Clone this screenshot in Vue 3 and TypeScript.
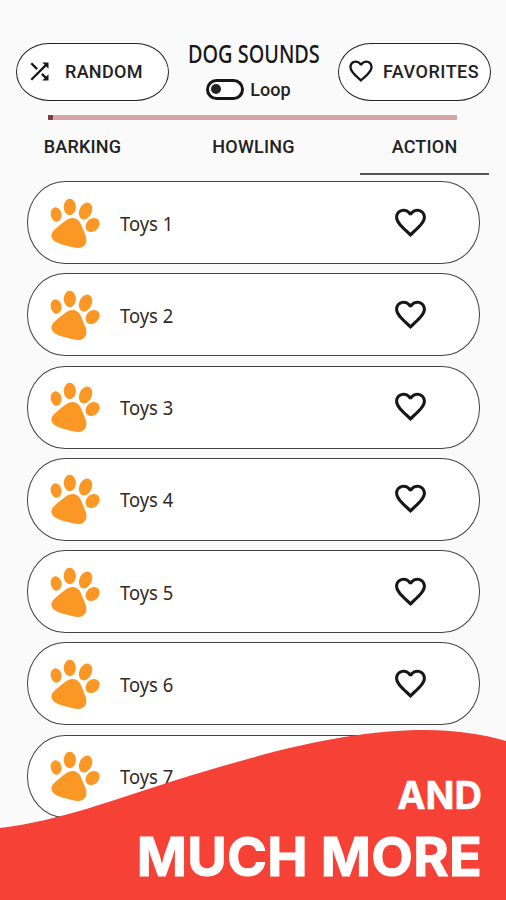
<script setup lang="ts">
const tabs: string[] = ['BARKING', 'HOWLING', 'ACTION']
const activeTab = 'ACTION'
const sounds: string[] = [1, 2, 3, 4, 5, 6, 7].map((n) => `Toys ${n}`)
const heart =
  'M16.5 3c-1.74 0-3.41.81-4.5 2.09C10.91 3.81 9.24 3 7.5 3 4.42 3 2 5.42 2 8.5c0 3.78 3.4 6.86 8.55 11.54L12 21.35l1.45-1.32C18.6 15.36 22 12.28 22 8.5 22 5.42 19.58 3 16.5 3zm-4.4 15.55l-.1.1-.1-.1C7.14 14.24 4 11.39 4 8.5 4 6.5 5.5 5 7.5 5c1.54 0 3.04.99 3.57 2.36h1.87C13.46 5.99 14.96 5 16.5 5c2 0 3.5 1.5 3.5 3.5 0 2.89-3.14 5.74-7.9 10.05z'
</script>

<template>
  <main class="screen">
    <header class="top">
      <button class="pill random">
        <svg class="shuffle" viewBox="0 0 24 24">
          <path d="M10.59 9.17L5.41 4 4 5.41l5.17 5.17 1.42-1.41zM14.5 4l2.04 2.04L4 18.59 5.41 20 17.96 7.46 20 9.5V4h-5.5zm.33 9.41l-1.41 1.41 3.13 3.13L14.5 20H20v-5.5l-2.04 2.04-3.13-3.13z" />
        </svg>
        <span class="random-label">RANDOM</span>
      </button>
      <div class="center">
        <h1 class="title"><span class="title-text">DOG SOUNDS</span></h1>
        <label class="loop">
          <span class="switch"><span class="knob"></span></span>
          <span class="loop-label">Loop</span>
        </label>
      </div>
      <button class="pill favorites">
        <svg class="fav-heart" viewBox="0 0 24 24"><path :d="heart" /></svg>
        <span class="fav-label">FAVORITES</span>
      </button>
    </header>

    <div class="progress"><span class="progress-dot"></span></div>

    <nav class="tabs">
      <a v-for="tab in tabs" :key="tab" class="tab" :class="{ active: tab === activeTab }"><span>{{ tab }}</span></a>
    </nav>

    <ul class="list">
      <li v-for="sound in sounds" :key="sound" class="card">
        <svg class="paw" viewBox="0 0 50 51">
          <ellipse cx="6.1" cy="16.4" rx="5.4" ry="7.3" transform="rotate(-10 6.1 16.4)" />
          <ellipse cx="19.8" cy="9" rx="6.1" ry="8.2" />
          <ellipse cx="35.6" cy="13" rx="6.2" ry="8.8" transform="rotate(24 35.6 13)" />
          <ellipse cx="42.6" cy="27" rx="6.2" ry="7.8" transform="rotate(45 42.6 27)" />
          <path d="M16.5 22C21.5 18.4 28 19.5 30.6 25.5C32.3 29.5 34.2 33.5 35.9 38.5C38 45 34 50.6 27.5 49.9C21.5 49.2 14.5 47.4 8 45C2.4 42.8 0.3 38.5 2 35C4 31.2 11.5 25.6 16.5 22Z" />
        </svg>
        <span class="name">{{ sound }}</span>
        <svg class="heart" viewBox="0 0 24 24"><path :d="heart" /></svg>
      </li>
    </ul>

    <footer class="banner">
      <svg class="wave" viewBox="0 0 506 172" preserveAspectRatio="none">
        <path d="M0 100C60 93 115 71 173 53C200 44.7 226 37 253 29.5C315 12 375 2 425 2C455 2 482 6 506 13V172H0Z" />
      </svg>
      <p class="and">AND</p>
      <p class="more">MUCH MORE</p>
    </footer>
  </main>
</template>

<style>
body {
  margin: 0;
  background: #fafafa;
}
</style>

<style scoped>
.screen {
  position: relative;
  box-sizing: border-box;
  width: 506px;
  height: 900px;
  padding-top: 43px;
  overflow: hidden;
  background: #fafafa;
  color: #222;
  font-family: Roboto, "Liberation Sans", sans-serif;
}
.top {
  display: flex;
  height: 70px;
  padding: 0 15px 0 16px;
  align-items: flex-start;
}
.pill {
  box-sizing: border-box;
  display: flex;
  align-items: center;
  width: 153px;
  height: 58px;
  padding: 0 0 2px;
  border: 1.6px solid #222;
  border-radius: 33px / 29px;
  background: #fff;
  color: #222;
  font: 500 18px Roboto, "Liberation Sans", sans-serif;
}
svg {
  display: block;
  flex: none;
}
.shuffle {
  width: 27px;
  height: 27px;
  margin-left: 9px;
  fill: #171717;
}
.random-label {
  margin-left: 12px;
  letter-spacing: 0.3px;
}
.fav-heart {
  width: 28px;
  height: 28px;
  margin-left: 8px;
  fill: #171717;
}
.fav-label {
  margin-left: 8px;
  letter-spacing: 0.5px;
}
.center {
  display: flex;
  flex-direction: column;
  align-items: center;
  width: 169px;
}
.title {
  margin: -5px 0 0;
  width: 169px;
  height: 30px;
  display: flex;
  justify-content: center;
  color: #171717;
  font: 500 25px/30px "Noto Sans", sans-serif;
  white-space: nowrap;
}
.title-text {
  transform: scaleX(0.795);
}
.loop {
  display: flex;
  align-items: center;
  gap: 6px;
  margin: 10px 10px 0 0;
  height: 22px;
}
.switch {
  box-sizing: border-box;
  width: 38px;
  height: 21px;
  padding: 2.5px 2px;
  border: 3px solid #171717;
  border-radius: 11px;
  background: #fff;
}
.knob {
  display: block;
  width: 10px;
  height: 10px;
  border-radius: 50%;
  background: #222;
}
.loop-label {
  font-size: 18px;
  font-weight: 500;
  letter-spacing: 0.1px;
}
.progress {
  width: 409px;
  height: 5px;
  margin: 2px 0 0 48px;
  background: #d3a5a7;
}
.progress-dot {
  display: block;
  width: 5px;
  height: 5px;
  border-radius: 1px;
  background: #7c3a4b;
}
.tabs {
  display: flex;
  justify-content: space-between;
  height: 55px;
  padding: 0 17px 0 18px;
}
.tab {
  box-sizing: border-box;
  width: 129px;
  height: 55px;
  padding-top: 15px;
  text-align: center;
  font-size: 18px;
  line-height: 23px;
  font-weight: 500;
  letter-spacing: 0.2px;
}
.tab.active {
  border-bottom: 2px solid #555;
}
.list {
  display: flex;
  flex-direction: column;
  gap: 9.3px;
  margin: 6px 26px 0 27px;
  padding: 0;
  list-style: none;
}
.card {
  box-sizing: border-box;
  display: flex;
  flex: none;
  align-items: center;
  height: 83px;
  border: 1.5px solid #444;
  border-radius: 38px / 41px;
  background: #fff;
}
.paw {
  width: 50px;
  height: 51px;
  margin: 1px 0 0 22px;
  fill: #fb9724;
}
.name {
  width: 272px;
  margin: 2px 0 0 20px;
  transform: scaleX(0.92);
  transform-origin: left;
  color: #33281f;
  font: 20px/28px "Noto Sans", sans-serif;
}
.heart {
  width: 37px;
  height: 37px;
  margin-top: -1px;
  fill: #171717;
}
.banner {
  position: absolute;
  inset: 728px 0 0;
  color: #fff;
  font-family: Inter, "Liberation Sans", sans-serif;
  font-weight: 700;
  text-align: right;
}
.wave {
  position: absolute;
  inset: 0;
  width: 506px;
  height: 172px;
  fill: #f64137;
}
.and,
.more {
  position: relative;
  margin: 0;
  padding-right: 24px;
}
.and {
  padding-top: 44px;
  font-size: 38px;
  line-height: 46px;
  -webkit-text-stroke: 0.5px #fff;
}
.more {
  padding-top: 7px;
  font-size: 54px;
  line-height: 64px;
  letter-spacing: 0.25px;
  white-space: nowrap;
  -webkit-text-stroke: 1px #fff;
}
</style>
